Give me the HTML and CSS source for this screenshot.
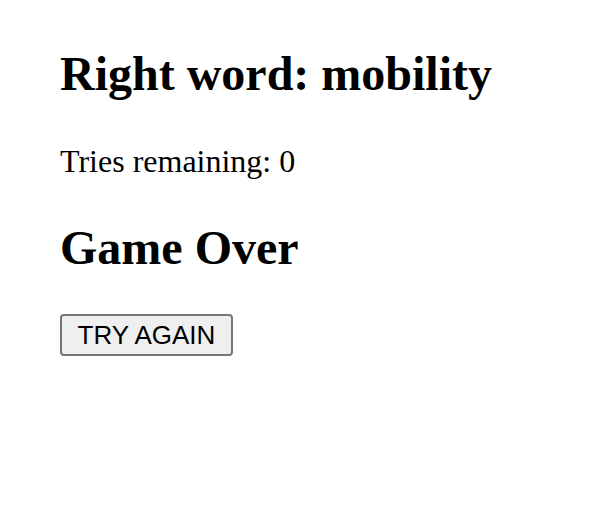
FILE: index.html
```html
<!DOCTYPE html>
<html lang="en">
<head>
<meta charset="utf-8">
<title>Game Over</title>
<link rel="stylesheet" href="styles.css">
</head>
<body>
<main class="game">
  <h2 class="title">Right word: mobility</h2>
  <p class="tries">Tries remaining: 0</p>
  <h2 class="status">Game Over</h2>
  <button class="retry" type="button">TRY AGAIN</button>
</main>
</body>
</html>
```
FILE: styles.css
```css
html, body {
  margin: 0;
  background: #ffffff;
}
.game {
  padding: 46px 0 0 60px;
  display: flex;
  flex-direction: column;
  align-items: flex-start;
  font-family: "Liberation Serif", "Times New Roman", serif;
  color: #000;
}
.title, .status {
  margin: 0;
  font-size: 48px;
  line-height: 56px;
  font-weight: bold;
}
.title { margin-bottom: 41px; }
.tries {
  margin: 0 0 40px;
  font-size: 32px;
  line-height: 37px;
}
.status { margin-bottom: 38px; }
.retry {
  box-sizing: border-box;
  width: 173px;
  height: 42px;
  margin: 0;
  padding: 0;
  display: flex;
  align-items: center;
  justify-content: center;
  font-family: "Liberation Sans", Arial, sans-serif;
  font-size: 26px;
  color: #000;
  background: #efefef;
  border: 2px solid #767676;
  border-radius: 4px;
}
```
